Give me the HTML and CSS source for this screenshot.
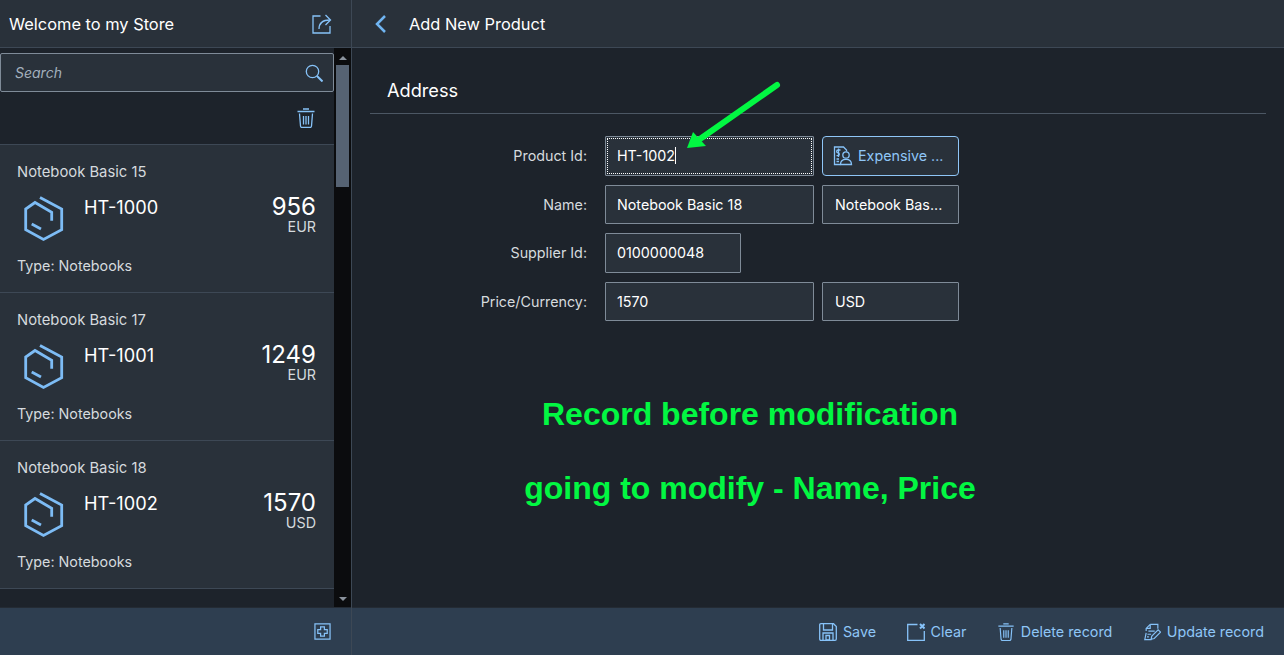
FILE: index.html
```html
<!DOCTYPE html>
<html lang="en">
<head>
<meta charset="utf-8">
<title>Welcome to my Store</title>
<link rel="stylesheet" href="styles.css">
</head>
<body>
<div class="app">
  <section class="master">
    <header class="bar head master-head">
      <h1 class="title">Welcome to my Store</h1>
      <svg class="icon" viewBox="0 0 20 20"><path d="M8.500 2H1v17h17v-7"/><path d="M7 15c0-5.500 3.500-9 11-9"/><path d="M13.500 1l5 5-5 5"/></svg>
    </header>
    <div class="master-body">
      <div class="list-pane">
        <div class="search">
          <span class="search-text">Search</span>
          <svg class="icon" viewBox="0 0 18 18"><circle cx="7.500" cy="7.500" r="6.200"/><path d="M12 12l5.500 5.500" class="thick"/></svg>
        </div>
        <div class="list-tools">
          <svg class="icon" viewBox="0 0 18 20"><path d="M0.500 3.500h17M6 1h6M2.500 5.500l1 12.500q.2 1.500 1.500 1.500h8q1.300 0 1.500-1.500l1-12.500M6.500 8v8.500M9 8v8.500M11.500 8v8.500"/></svg>
        </div>
        <article class="item">
          <div class="item-name">Notebook Basic 15</div>
          <div class="item-main">
            <svg class="cube" viewBox="0 0 40 48"><path d="M16 3.500L37.700 15v20.700L19.500 45.500 1.700 35.700V15L11 8.500 27.700 18.300v8.400"/><path d="M7.700 30l9.300 5"/></svg>
            <div class="item-id">HT-1000</div>
            <div class="item-price"><div class="amount">956</div><div class="unit">EUR</div></div>
          </div>
          <div class="item-type">Type: Notebooks</div>
        </article>
        <article class="item">
          <div class="item-name">Notebook Basic 17</div>
          <div class="item-main">
            <svg class="cube" viewBox="0 0 40 48"><path d="M16 3.500L37.700 15v20.700L19.500 45.500 1.700 35.700V15L11 8.500 27.700 18.300v8.400"/><path d="M7.700 30l9.300 5"/></svg>
            <div class="item-id">HT-1001</div>
            <div class="item-price"><div class="amount">1249</div><div class="unit">EUR</div></div>
          </div>
          <div class="item-type">Type: Notebooks</div>
        </article>
        <article class="item">
          <div class="item-name">Notebook Basic 18</div>
          <div class="item-main">
            <svg class="cube" viewBox="0 0 40 48"><path d="M16 3.500L37.700 15v20.700L19.500 45.500 1.700 35.700V15L11 8.500 27.700 18.300v8.400"/><path d="M7.700 30l9.300 5"/></svg>
            <div class="item-id">HT-1002</div>
            <div class="item-price"><div class="amount">1570</div><div class="unit">USD</div></div>
          </div>
          <div class="item-type">Type: Notebooks</div>
        </article>
      </div>
      <div class="scrollbar">
        <span class="arrow-up"></span>
        <span class="thumb"></span>
        <span class="arrow-down"></span>
      </div>
    </div>
    <footer class="bar foot master-foot">
      <svg class="icon" viewBox="0 0 18 18"><path d="M1 1h16v16H1z"/><path d="M7 4h4v3h3v4h-3v3H7v-3H4V7h3z"/></svg>
    </footer>
  </section>
  <section class="detail">
    <header class="bar head detail-head">
      <svg class="back" viewBox="0 0 12 20"><path d="M10 2L2 10l8 8"/></svg>
      <h2 class="title">Add New Product</h2>
    </header>
    <main class="detail-body">
      <h3 class="section-title">Address</h3>
      <form class="form">
        <label class="label">Product Id:</label>
        <div class="field focus"><span class="value">HT-1002</span><span class="caret"></span></div>
        <div class="field button">
          <svg class="icon" viewBox="0 0 20 20"><path d="M7.500 18.500H1.500V1h9l3 3v1.500"/><circle cx="13" cy="9" r="3.200"/><path d="M7.500 18.500c0-3.500 2-5.200 5.500-5.200s5.500 1.700 5.500 5.200z"/><path d="M7.500 4H5c-1.800 0-1.800 2.800 0 2.800s1.800 2.800 0 2.800H3.500M5.500 2.500v8.500M3.500 13h2.500M3.500 15.500h2.500"/></svg>
          <span>Expensive ...</span>
        </div>

        <label class="label">Name:</label>
        <div class="field"><span class="value">Notebook Basic 18</span></div>
        <div class="field"><span class="value">Notebook Bas...</span></div>

        <label class="label">Supplier Id:</label>
        <div class="field narrow"><span class="value">0100000048</span></div>

        <label class="label">Price/Currency:</label>
        <div class="field"><span class="value">1570</span></div>
        <div class="field"><span class="value">USD</span></div>
      </form>
    </main>
    <footer class="bar foot detail-foot">
      <button class="action" type="button"><svg class="icon" viewBox="0 0 18 18"><path d="M2 .7h12.500L17.300 3.500V16q0 1.300-1.300 1.300H2Q.7 17.300.7 16V2Q.7.700 2 .7z"/><path d="M4.500 1v6h9V1M4 17v-7h10v7"/><path d="M7 12.500h3.500v4.500H7z"/></svg>Save</button>
      <button class="action" type="button"><svg class="icon" viewBox="0 0 18 18"><path d="M10.500 1.500H.7v15.800h16.600V8"/><path d="M13 1l4.500 4.500M17.500 1L13 5.500" class="thick"/></svg>Clear</button>
      <button class="action" type="button"><svg class="icon" viewBox="0 0 18 20"><path d="M0.500 3.500h17M6 1h6M2.500 5.500l1 12.500q.2 1.500 1.500 1.500h8q1.300 0 1.500-1.500l1-12.500M6.500 8v8.500M9 8v8.500M11.500 8v8.500"/></svg>Delete record</button>
      <button class="action" type="button"><svg class="icon" viewBox="0 0 20 20"><path d="M8 1.500v4.500H3.500M8 1.500L3.500 6v3M3.500 11L2 18.500h7.500"/><path d="M8 1.500h8.500v5"/><path d="M6 9h7M5 12.500h4M4.500 15.500h2"/><path d="M9 18l.8-3.500 7-7 2.700 2.700-7 7z"/></svg>Update record</button>
    </footer>
  </section>
  <div class="note note-one">Record before modification</div>
  <div class="note note-two">going to modify - Name, Price</div>
  <svg class="pointer" viewBox="0 0 110 80"><path class="pointer-line" d="M91 4L14 58"/><path class="pointer-head" d="M1 67l6-16 13 14z"/></svg>
</div>
</body>
</html>
```
FILE: styles.css
```css
* { box-sizing: border-box; }
html, body { margin: 0; height: 100%; }
body { background: #1d232b; color: #fff; font-family: Inter, "Noto Sans", Arial, sans-serif; font-size: 14.300px; overflow: hidden; }
.app { position: relative; display: flex; width: 1284px; height: 655px; }
.master { display: flex; flex-direction: column; width: 352px; border-right: 1px solid #3d4855; }
.detail { display: flex; flex-direction: column; flex: 1; min-width: 0; }
.bar { display: flex; align-items: center; height: 48px; flex: none; }
.head { background: #29313a; border-bottom: 1px solid #3d4855; }
.foot { background: #2e3e50; border-top: 1px solid #242b34; }
.title { margin: 0; font-size: 16.400px; font-weight: 400; color: #fff; }
.icon { fill: none; stroke: #86c2f8; stroke-width: 1.300; flex: none; }
.thick { stroke-width: 2; }
.master-head { justify-content: space-between; padding: 0 19px 0 9px; }
.master-head .icon { width: 20px; height: 20px; }
.master-body { display: flex; flex: 1; min-height: 0; }
.list-pane { flex: 1; min-width: 0; overflow: hidden; }
.search { display: flex; align-items: center; justify-content: space-between; height: 39px; margin-top: 5px; padding: 0 10px 0 14px; background: #29313a; border: 1px solid #7f8b98; border-radius: 2px; }
.search-text { font-size: 14px; font-style: italic; color: #a3b0bd; }
.search .icon { width: 18px; height: 18px; }
.list-tools { display: flex; align-items: center; justify-content: flex-end; height: 53px; padding-right: 19px; border-bottom: 1px solid #3d4855; }
.list-tools .icon { width: 18px; height: 20px; }
.item { height: 148px; padding: 18px 18px 0 17px; background: #29313a; border-bottom: 1px solid #3d4855; }
.item-name { height: 18px; font-size: 14.800px; line-height: 18px; color: #d5dade; }
.item-main { display: flex; height: 64px; margin-top: 6px; }
.cube { width: 40px; height: 48px; margin: 7px 20px 0 7px; fill: none; stroke: #7dbcf5; stroke-width: 2.800; flex: none; }
.item-id { flex: 1; margin-top: 8px; font-size: 18.200px; line-height: 24px; color: #fff; }
.item-price { text-align: right; }
.amount { margin-top: 8px; font-size: 24px; line-height: 24px; color: #fff; }
.unit { line-height: 16px; color: #d5dade; }
.item-type { margin-top: 6px; line-height: 18px; color: #d5dade; }
.scrollbar { display: flex; flex-direction: column; align-items: center; width: 17px; background: #0b0c0e; position: relative; flex: none; }
.arrow-up { width: 0; height: 0; margin-top: 8px; border: 4px solid transparent; border-top: 0; border-bottom: 4px solid #8a929c; }
.thumb { width: 13px; height: 122px; margin-top: 5px; background: #566373; }
.arrow-down { width: 0; height: 0; margin-top: auto; margin-bottom: 6px; border: 4px solid transparent; border-bottom: 0; border-top: 4px solid #8a929c; }
.master-foot { justify-content: flex-end; padding-right: 20px; }
.master-foot .icon { width: 17px; height: 17px; }
.detail-head { padding-left: 22px; gap: 21px; }
.back { width: 14px; height: 20px; fill: none; stroke: #70b5f2; stroke-width: 2.500; }
.detail-body { flex: 1; min-height: 0; padding: 18px 18px 0; }
.section-title { height: 48px; margin: 0; padding: 11px 0 0 17px; font-size: 18.200px; line-height: 26px; font-weight: 400; color: #fff; border-bottom: 1px solid #4c5764; }
.form { display: grid; grid-template-columns: 235px 209px 137px; grid-template-rows: 40px 39px 40px 39px; row-gap: 9px; margin-top: 22px; }
.label { grid-column: 1; align-self: center; padding: 0 18px 1px 0; text-align: right; color: #d5dade; }
.field { display: flex; align-items: center; padding: 0 11px 1px; background: #29313a; border: 1px solid #7f8b98; border-radius: 1px; color: #fff; }
.field + .field { margin-left: 8px; width: 137px; padding-left: 12px; }
.value { white-space: nowrap; }
.focus { outline: 1px dotted #fff; outline-offset: -3px; }
.caret { width: 1px; height: 17px; background: #fff; }
.field.button { gap: 5px; padding: 0 10px 1px; border-color: #8fc6f7; border-radius: 4px; color: #8fc6f7; }
.button .icon { width: 20px; height: 20px; }
.narrow { width: 136px; }
.detail-foot { justify-content: flex-end; gap: 30.500px; padding-right: 20px; }
.action { display: flex; align-items: center; gap: 6px; padding: 0; background: none; border: 0; color: #8fc6f7; font: inherit; }
.action .icon { width: 18px; height: 18px; }
.note { position: absolute; left: 352px; width: 796px; text-align: center; color: #02f742; font-family: "Liberation Sans", Arial, sans-serif; font-size: 32px; font-weight: 700; line-height: 40px; }
.note-one { top: 394px; }
.note-two { top: 468px; }
.pointer { position: absolute; left: 686px; top: 81px; width: 110px; height: 80px; }
.pointer-line { fill: none; stroke: #02f742; stroke-width: 6; stroke-linecap: round; }
.pointer-head { fill: #02f742; }
```
